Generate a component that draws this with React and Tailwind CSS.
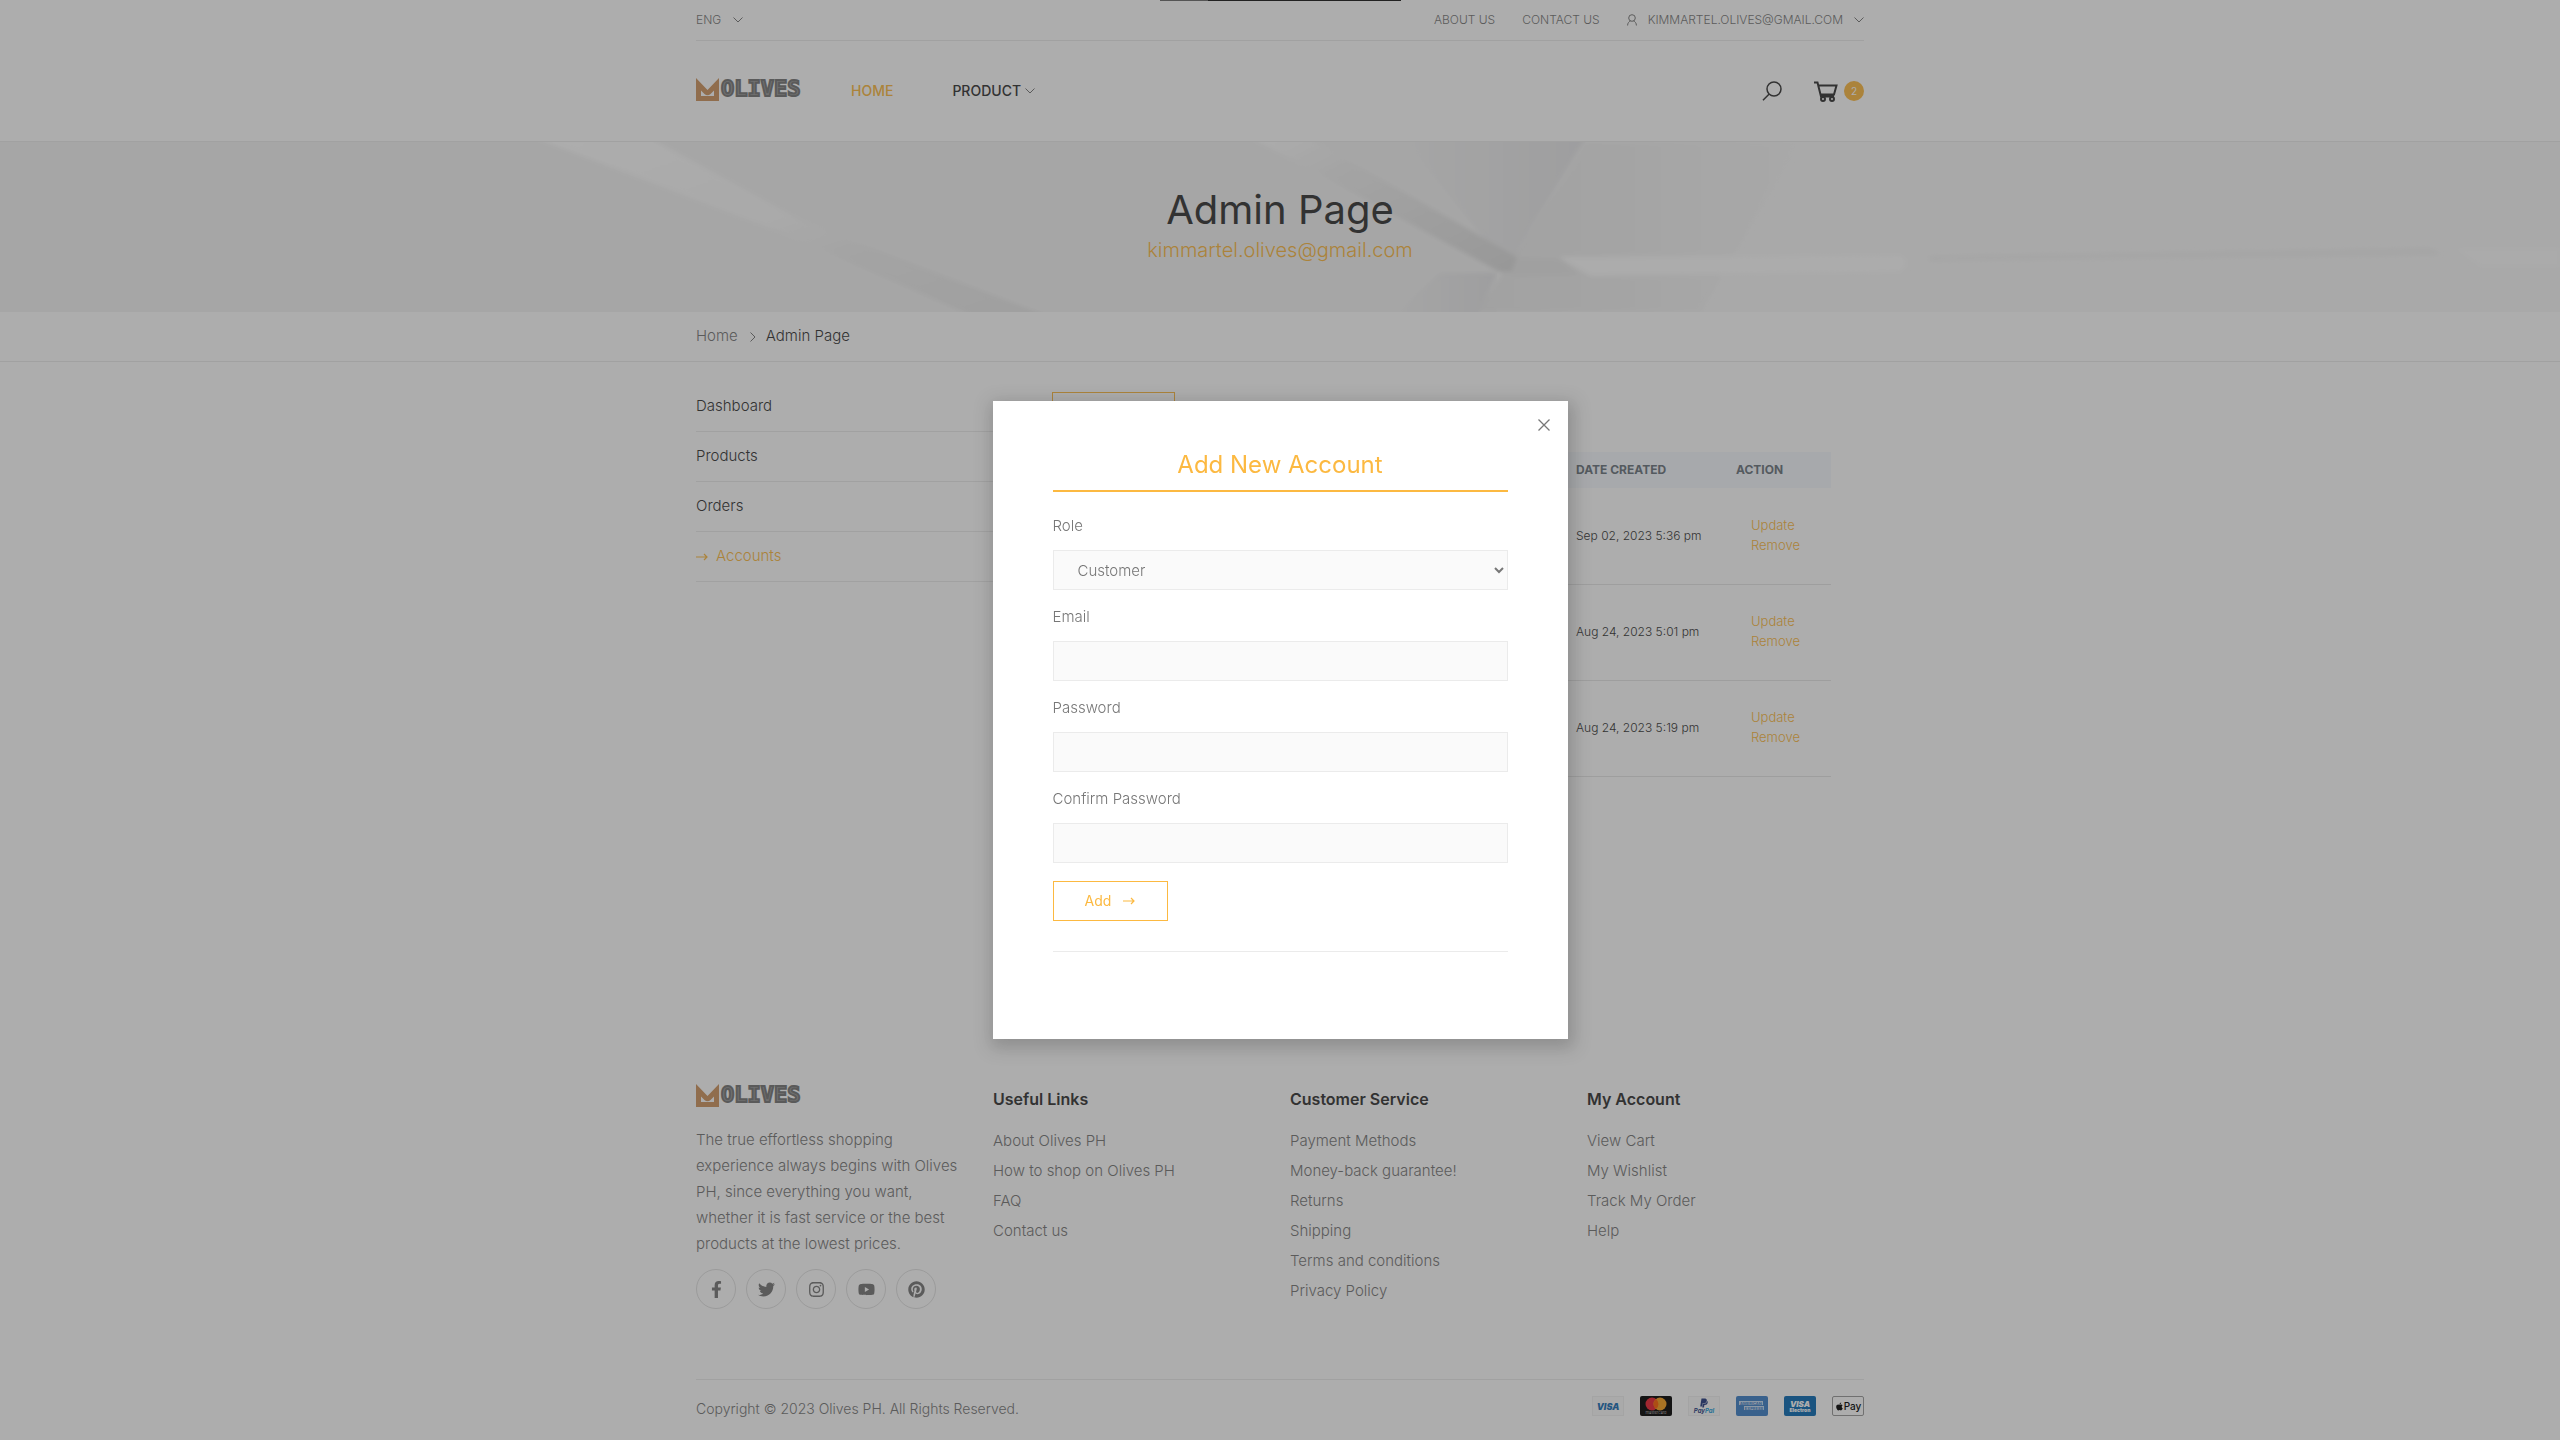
import React from "react";
import { FaFacebookF, FaTwitter, FaInstagram, FaYoutube, FaPinterest, FaApple, FaPaypal } from "react-icons/fa";

const Chevron = ({ className = "" }) => (
  <svg width="10" height="6" viewBox="0 0 10 6" className={className} fill="none" stroke="currentColor" aria-hidden="true">
    <path d="M0.5 0.5 L5 5 L9.5 0.5" />
  </svg>
);

const Arrow = () => (
  <svg width="12" height="8" viewBox="0 0 12 8" fill="none" stroke="currentColor" aria-hidden="true">
    <path d="M0 4 H11 M8 1 L11 4 L8 7" strokeWidth="1.2" />
  </svg>
);

const Logo = () => (
  <a href="#home" aria-label="Olives" className="flex items-center gap-0.5">
    <svg width="23" height="23" viewBox="0 0 23 23" fill="#cf955f" aria-hidden="true">
      <path fillRule="evenodd" d="M0 0 L11.5 12 L23 0 V23 H0 Z M5 12.500 V18 H18 V12.500 L14.500 16 Q11.500 18.500 8.500 16 Z" />
    </svg>
    <span className="font-['DejaVu_Sans_Mono',monospace] text-[22px] leading-6 font-bold text-[#9c9c9c] [-webkit-text-stroke:2px_#767676]">
      OLIVES
    </span>
  </a>
);

const BannerArt = () => (
  <svg className="absolute inset-0 h-full w-full" viewBox="0 0 2560 170" preserveAspectRatio="none" aria-hidden="true">
    <defs>
      <linearGradient id="beam" x1="0" y1="0" x2="1" y2="1">
        <stop offset="0" stopColor="#fff" />
        <stop offset="0.45" stopColor="#fafafa" />
        <stop offset="0.65" stopColor="#efefef" />
        <stop offset="1" stopColor="#e8e8e8" />
      </linearGradient>
      <linearGradient id="beam2" x1="0" y1="0" x2="1" y2="1">
        <stop offset="0" stopColor="#fff" />
        <stop offset="0.3" stopColor="#f0f0f0" />
        <stop offset="1" stopColor="#dcdcdc" />
      </linearGradient>
      <linearGradient id="wedge" x1="0" y1="0" x2="1" y2="0">
        <stop offset="0" stopColor="#f4f4f4" />
        <stop offset="1" stopColor="#e6e6e8" />
      </linearGradient>
      <linearGradient id="fade" x1="0" y1="0" x2="1" y2="0">
        <stop offset="0" stopColor="#ececec" />
        <stop offset="1" stopColor="#f8f8f8" />
      </linearGradient>
      <filter id="soft" x="-5%" y="-20%" width="110%" height="140%">
        <feGaussianBlur stdDeviation="2" />
      </filter>
    </defs>
    <rect width="2560" height="170" fill="#f4f4f4" />
    <path d="M1586 0 H2560 V170 H1497 V131 Z" fill="#f8f8f8" />
    <g filter="url(#soft)">
      <path d="M1586 0 H1800 L1700 170 H1477 L1513 115 Z" fill="url(#fade)" />
      <path d="M1400 -5 H1586 L1513 115 L1500 115 Z" fill="url(#wedge)" />
      <path d="M1497 131 L1477 175 H1390 L1440 131 Z" fill="url(#wedge)" />
      <path d="M536 -4 H650 L800 78 L1050 175 H975 L775 88 Z" fill="url(#beam)" />
      <path d="M1252 -4 H1309 L1517 115 L1514 130 H1500 Z" fill="url(#beam2)" />
      <path d="M1517 116 H1560 L1580 134 H1510 Z" fill="#eaeaea" />
      <path d="M1558 115 L1900 112 Q1915 120 1900 131 L1590 134 Z" fill="#fdfdfd" />
      <path d="M1930 115 L2430 107 L2440 112 L1930 118 Z" fill="#f1f1f1" />
      <path d="M2455 106 H2560 V125 H2480 Z" fill="#fcfcfc" />
    </g>
  </svg>
);

const footerColumns = [
  { title: "Useful Links", links: ["About Olives PH", "How to shop on Olives PH", "FAQ", "Contact us"] },
  {
    title: "Customer Service",
    links: ["Payment Methods", "Money-back guarantee!", "Returns", "Shipping", "Terms and conditions", "Privacy Policy"],
  },
  { title: "My Account", links: ["View Cart", "My Wishlist", "Track My Order", "Help"] },
];

const socials = [
  ["Facebook", FaFacebookF],
  ["Twitter", FaTwitter],
  ["Instagram", FaInstagram],
  ["YouTube", FaYoutube],
  ["Pinterest", FaPinterest],
];

const accountDates = ["Sep 02, 2023 5:36 pm", "Aug 24, 2023 5:01 pm", "Aug 24, 2023 5:19 pm"];

function Header() {
  return (
    <header className="border-b border-[#ebebeb]">
      <div className="mx-auto max-w-[1168px]">
        <div className="flex h-[41px] items-center justify-between border-b border-[#ebebeb] text-xs font-light text-[#777]">
          <button className="flex items-center gap-3">
            ENG <Chevron />
          </button>
          <nav className="flex items-center gap-[27px]">
            <a href="#about">ABOUT US</a>
            <a href="#contact">CONTACT US</a>
            <button className="flex items-center gap-[11px]">
              <svg width="10" height="12" viewBox="0 0 10 12" fill="none" stroke="currentColor" aria-hidden="true">
                <circle cx="5" cy="4" r="3.300" />
                <path d="M0.600 11.500 C0.600 9 2 7.500 3.500 7 M9.400 11.500 C9.400 9 8 7.500 6.500 7" />
              </svg>
              KIMMARTEL.OLIVES@GMAIL.COM
              <Chevron />
            </button>
          </nav>
        </div>
        <div className="flex h-[100px] items-center justify-between">
          <div className="flex items-center">
            <div className="mb-6 mt-5 w-[155px]">
              <Logo />
            </div>
            <nav className="flex items-center gap-[59px] text-sm font-medium">
              <a href="#home" className="text-[#fcb941]">HOME</a>
              <a href="#product" className="flex items-center gap-1 text-[#333]">
                PRODUCT <Chevron className="text-[#777]" />
              </a>
            </nav>
          </div>
          <div className="flex items-center gap-8 text-[#333]">
            <button aria-label="Search">
              <svg width="20" height="20" viewBox="0 0 20 20" fill="none" stroke="currentColor" strokeWidth="1.500">
                <circle cx="12" cy="8" r="7" />
                <path d="M7.200 13 L1 19.300" />
              </svg>
            </button>
            <a href="#cart" aria-label="Cart" className="flex items-center gap-1.5">
              <svg width="24" height="21" viewBox="0 0 24 21" fill="none" stroke="currentColor" strokeWidth="2">
                <path d="M0 1.500 H3.500 L7 15.500 H20 M5 4.500 H22.500 L20 13.500 H6.500" />
                <circle cx="9" cy="18" r="2" />
                <circle cx="18" cy="18" r="2" />
              </svg>
              <span className="flex size-5 items-center justify-center rounded-full bg-[#fcb941] text-[10px] text-white">2</span>
            </a>
          </div>
        </div>
      </div>
    </header>
  );
}

function Content() {
  return (
    <main className="mx-auto grid w-full max-w-[1168px] grid-cols-[336px_1fr] items-start gap-5 pt-5">
      <nav className="text-[15px] font-light text-[#333]">
        {["Dashboard", "Products", "Orders"].map((item) => (
          <a key={item} href="#section" className="flex h-[50px] items-center border-b border-[#ebebeb]">
            {item}
          </a>
        ))}
        <a href="#accounts" className="flex h-[50px] items-center gap-2 border-b border-[#ebebeb] text-[#fcb941]">
          <Arrow /> Accounts
        </a>
      </nav>
      <div className="pr-[33px] pt-2.5">
        <button aria-label="Add account" className="block h-10 w-[123px] border border-[#fcb941]" />
        <table className="mt-5 w-full table-fixed text-left text-xs font-light text-[#333]">
          <thead>
            <tr className="h-9 bg-[#f6f9fd] font-bold text-[#6c757d]">
              <td />
              <th className="w-[160px] px-3">DATE CREATED</th>
              <th className="w-[107px] px-3">ACTION</th>
            </tr>
          </thead>
          <tbody>
            {accountDates.map((date) => (
              <tr key={date} className="h-24 border-b border-[#e6e6e6]">
                <td />
                <td className="whitespace-nowrap px-3">{date}</td>
                <td className="px-[27px] pb-0.5 text-[13px] text-[#fcb941]">
                  <a href="#update" className="block leading-5">Update</a>
                  <a href="#remove" className="block leading-5">Remove</a>
                </td>
              </tr>
            ))}
          </tbody>
        </table>
      </div>
    </main>
  );
}

function Payments() {
  return (
    <div className="flex items-center gap-4 pb-1.5 leading-none">
      <span className="flex h-5 w-8 items-center justify-center border border-[#f0f0f0] bg-[#fafafa] text-[9px] font-black italic text-[#1a6fb5]">VISA</span>
      <svg width="32" height="20" viewBox="0 0 32 20" role="img" aria-label="mastercard">
        <rect width="32" height="20" rx="2" fill="#000" />
        <circle cx="12" cy="8" r="6.500" fill="#eb2030" />
        <circle cx="20" cy="8" r="6.500" fill="#f79e1b" />
        <path d="M16 2.900 A6.500 6.500 0 0 1 16 13.100 A6.500 6.500 0 0 1 16 2.900" fill="#ff5f00" />
        <text x="16" y="18" fontSize="4" textAnchor="middle" fill="#ddd">mastercard</text>
      </svg>
      <span className="flex h-5 w-8 flex-col items-center justify-center border border-[#f0f0f0] bg-[#fafafa] text-[6px] font-bold italic text-[#253b80]">
        <FaPaypal size={10} />
        <span>Pay<span className="text-[#179bd7]">Pal</span></span>
      </span>
      <svg width="32" height="20" viewBox="0 0 32 20" role="img" aria-label="American Express">
        <rect width="32" height="20" rx="2" fill="#3f80c8" />
        <rect x="3" y="5" width="24" height="4" fill="#c8dcf2" />
        <rect x="8" y="10" width="20" height="4" fill="#c8dcf2" />
        <text x="15" y="8.500" fontSize="4" fontWeight="700" textAnchor="middle" fill="#3f80c8">AMERICAN</text>
        <text x="18" y="13.500" fontSize="4" fontWeight="700" textAnchor="middle" fill="#3f80c8">EXPRESS</text>
      </svg>
      <span className="flex h-5 w-8 flex-col items-center justify-center rounded-xs bg-[#0a6bb5] text-[8px] font-black italic text-white">
        VISA
        <span className="text-[5px] not-italic">Electron</span>
      </span>
      <span className="flex h-5 w-8 items-center justify-center rounded-xs border border-[#999] text-[10px] font-medium text-black">
        <FaApple size={9} />
        Pay
      </span>
    </div>
  );
}

function Footer() {
  return (
    <footer className="mx-auto mt-auto w-full max-w-[1168px] font-light text-[#777]">
      <div className="grid grid-cols-4 gap-5 pb-[70px] text-[15px]">
        <div>
          <Logo />
          <p className="mt-5 leading-[26px]">
            The true effortless shopping
            <br />
            experience always begins with Olives PH, since everything you want,
            <br />
            whether it is fast service or the best products at the lowest prices.
          </p>
          <div className="mt-3 flex gap-2.5">
            {socials.map(([name, Icon]) => (
              <a key={name} href="#social" aria-label={name} className="flex size-10 items-center justify-center rounded-full border border-[#e1e1e1]">
                <Icon size={17} />
              </a>
            ))}
          </div>
        </div>
        {footerColumns.map(({ title, links }) => (
          <div key={title} className="pt-1">
            <h2 className="text-base font-semibold text-[#333]">{title}</h2>
            <ul className="mt-[15px]">
              {links.map((link) => (
                <li key={link} className="leading-[30px]">
                  <a href="#link">{link}</a>
                </li>
              ))}
            </ul>
          </div>
        ))}
      </div>
      <div className="flex h-[61px] items-center justify-between border-t border-[#ebebeb] pb-0.5 text-sm">
        <p>Copyright © 2023 Olives PH. All Rights Reserved.</p>
        <Payments />
      </div>
    </footer>
  );
}

const fields = [
  ["email", "Email", "email"],
  ["password", "Password", "password"],
  ["confirm", "Confirm Password", "password"],
];

function AccountModal() {
  return (
    <div className="fixed inset-0 flex items-center justify-center bg-[#333]/40">
      <section role="dialog" aria-labelledby="dialog-title" className="relative w-[575px] bg-white px-[60px] pb-[87px] pt-[47px] text-[15px] font-light text-[#777] shadow-[2px_5px_16px_4px_rgba(51,51,51,0.25)]">
        <button aria-label="Close" className="absolute right-[18px] top-[18px]">
          <svg width="12" height="12" viewBox="0 0 12 12" stroke="currentColor" strokeWidth="1.300">
            <path d="M0.500 0.500 L11.500 11.500 M11.500 0.500 L0.500 11.500" />
          </svg>
        </button>
        <h2 id="dialog-title" className="border-b-2 border-[#fcb941] pb-[9px] text-center text-2xl leading-[33px] font-normal text-[#fcb941]">
          Add New Account
        </h2>
        <form className="mt-[19px] flex flex-col gap-3 border-b border-[#ebebeb] pb-[30px]">
          <div>
            <label htmlFor="role" className="mb-[9px] block leading-[30px]">Role</label>
            <select id="role" className="block h-10 w-full border border-[#ebebeb] bg-[#fafafa] pl-5">
              <option>Customer</option>
            </select>
          </div>
          {fields.map(([id, label, type]) => (
            <div key={id}>
              <label htmlFor={id} className="mb-[9px] block leading-[30px]">{label}</label>
              <input id={id} type={type} className="block h-10 w-full border border-[#ebebeb] bg-[#fafafa] px-5" />
            </div>
          ))}
          <button type="button" className="mt-1.5 flex h-10 w-[115px] items-center justify-center gap-3 border border-[#fcb941] text-sm font-normal text-[#fcb941]">
            Add <Arrow />
          </button>
        </form>
      </section>
    </div>
  );
}

export default function App() {
  return (
    <div className="flex min-h-screen flex-col bg-white font-['Inter',sans-serif]">
      <Header />
      <section className="relative flex h-[170px] flex-col items-center justify-center pt-0.5">
        <BannerArt />
        <h1 className="relative text-[40px] leading-11 text-[#333]">Admin Page</h1>
        <p className="relative text-xl leading-9 font-light text-[#fcb941]">kimmartel.olives@gmail.com</p>
      </section>
      <div className="border-b border-[#ebebeb]">
        <nav className="mx-auto flex h-[49px] max-w-[1168px] items-center text-[15px] font-light text-[#777]">
          <a href="#home">Home</a>
          <Chevron className="ml-2.5 mr-2 -rotate-90" />
          <span className="text-[#333]">Admin Page</span>
        </nav>
      </div>
      <Content />
      <Footer />
      <AccountModal />
      <div className="fixed inset-x-0 top-0 mx-auto flex h-px w-[241px] bg-[#222]">
        <div className="w-12 bg-[#555]" />
      </div>
    </div>
  );
}
